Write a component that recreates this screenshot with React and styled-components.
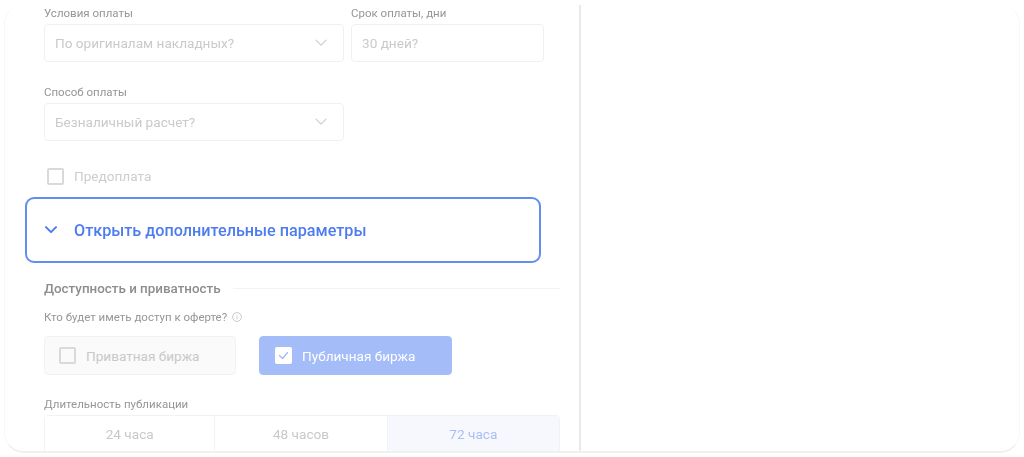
import styled, { createGlobalStyle } from "styled-components";

const GlobalStyle = createGlobalStyle`
  html, body {
    margin: 0;
    padding: 0;
    background: #fff;
    font-family: Roboto, "Liberation Sans", sans-serif;
  }
`;

const Page = styled.div`
  width: 1024px;
  height: 457px;
  padding: 4px;
  box-sizing: border-box;
  overflow: hidden;
`;

const Card = styled.div`
  display: flex;
  height: 449px;
  box-sizing: border-box;
  background: #fff;
  border: 1px solid #f8f8f8;
  border-top-color: #fdfdfd;
  border-bottom: 2px solid #f0f0f0;
  border-radius: 20px;
  overflow: hidden;
  filter: blur(0.35px);
`;

const LeftColumn = styled.div`
  width: 576px;
  box-sizing: border-box;
  padding: 1px 19px 0 39px;
  border-right: 2px solid #e9e9e9;
  flex-shrink: 0;
`;

const RightColumn = styled.div`
  flex: 1;
`;

const Row = styled.div`
  display: flex;
  gap: 7px;
`;

const Field = styled.div`
  width: ${(props) => props.width}px;
`;

const Label = styled.div`
  font-size: 11.5px;
  line-height: 14px;
  height: 14px;
  color: #969696;
  margin-bottom: 4px;
`;

const Control = styled.div`
  display: flex;
  align-items: center;
  justify-content: space-between;
  height: 38px;
  box-sizing: border-box;
  padding: 0 16px 0 10px;
  border: 1px solid #f0f0f0;
  border-radius: 4px;
  font-size: 13.6px;
  color: #cacaca;
`;

const SecondRow = styled(Row)`
  margin-top: 23px;
`;

const Check = styled.label`
  display: flex;
  align-items: center;
  gap: 10px;
  margin: 26px 0 0 3px;
  height: 18px;
  font-size: 13.6px;
  color: #cdcdcd;
`;

const Box = styled.span`
  display: flex;
  align-items: center;
  justify-content: center;
  width: 17px;
  height: 17px;
  box-sizing: border-box;
  border: ${(props) => (props.$checked ? "none" : "2px solid #d9d9d9")};
  border-radius: 2px;
  background: ${(props) => (props.$checked ? "#fff" : "transparent")};
  flex-shrink: 0;
`;

const Expander = styled.div`
  display: flex;
  align-items: center;
  gap: 17px;
  width: 516px;
  height: 66px;
  box-sizing: border-box;
  margin: 12px 0 0 -19px;
  padding: 0 0 0 18px;
  border: 2px solid #648cf2;
  border-radius: 9px;
  font-size: 16.2px;
  font-weight: 500;
  color: #4d7cf0;
`;

const SectionHead = styled.div`
  display: flex;
  align-items: center;
  gap: 12px;
  margin-top: 17px;
  height: 17px;
  font-size: 13.4px;
  font-weight: 500;
  color: #8d8d8d;
`;

const Rule = styled.div`
  flex: 1;
  height: 1px;
  background: #f3f3f3;
`;

const HintLabel = styled(Label)`
  display: flex;
  align-items: center;
  gap: 5px;
  margin: 13px 0 1px;
`;

const ExchangeRow = styled.div`
  display: flex;
  gap: 23px;
  margin-top: 12px;
`;

const Exchange = styled.div`
  display: flex;
  align-items: center;
  gap: 10px;
  width: ${(props) => (props.$active ? 193 : 192)}px;
  height: 39px;
  box-sizing: border-box;
  padding-left: ${(props) => (props.$active ? 15 : 14)}px;
  border: 1px solid ${(props) => (props.$active ? "#a4bcf7" : "#f2f2f2")};
  border-radius: 4px;
  background: ${(props) => (props.$active ? "#a4bcf7" : "#fafafa")};
  font-size: 13.6px;
  color: ${(props) => (props.$active ? "#ffffff" : "#c9c9c9")};
`;

const DurationLabel = styled(Label)`
  margin: 22px 0 4px;
`;

const Segments = styled.div`
  display: flex;
  width: 516px;
  height: 40px;
  box-sizing: border-box;
  border: 1px solid #f2f2f2;
  border-radius: 4px;
`;

const Segment = styled.div`
  display: flex;
  align-items: center;
  justify-content: center;
  width: ${(props) => props.width}px;
  border-right: ${(props) => (props.$last ? "none" : "1px solid #f2f2f2")};
  background: ${(props) => (props.$active ? "#f6f8fd" : "#fff")};
  font-size: 13.6px;
  padding-bottom: 2px;
  box-sizing: border-box;
  color: ${(props) => (props.$active ? "#a9bff5" : "#c9c9c9")};
`;

const Chevron = ({ color = "#cfcfcf", size = 12, width = 1.3 }) => (
  <svg width={size} height={size * 0.6} viewBox="0 0 12 7" fill="none">
    <path d="M1 1l5 5 5-5" stroke={color} strokeWidth={width} strokeLinecap="round" strokeLinejoin="round" />
  </svg>
);

const InfoIcon = () => (
  <svg width="10" height="10" viewBox="0 0 10 10" fill="none">
    <circle cx="5" cy="5" r="4.4" stroke="#bdbdbd" strokeWidth="0.8" />
    <path d="M5 4.4v2.8M5 2.7v.8" stroke="#bdbdbd" strokeWidth="0.8" />
  </svg>
);

const Tick = () => (
  <svg width="11" height="9" viewBox="0 0 11 9" fill="none">
    <path d="M1.5 4.5l3 3 5-6" stroke="#a4bcf7" strokeWidth="1.4" strokeLinecap="round" strokeLinejoin="round" />
  </svg>
);

const App = () => {
  return (
    <Page>
      <GlobalStyle />
      <Card>
        <LeftColumn>
          <Row>
            <Field width={300}>
              <Label>Условия оплаты</Label>
              <Control>
                По оригиналам накладных?
                <Chevron />
              </Control>
            </Field>
            <Field width={193}>
              <Label>Срок оплаты, дни</Label>
              <Control>30 дней?</Control>
            </Field>
          </Row>

          <SecondRow>
            <Field width={300}>
              <Label>Способ оплаты</Label>
              <Control>
                Безналичный расчет?
                <Chevron />
              </Control>
            </Field>
          </SecondRow>

          <Check>
            <Box />
            Предоплата
          </Check>

          <Expander>
            <Chevron color="#4d7cf0" size={12} width={2} />
            Открыть дополнительные параметры
          </Expander>

          <SectionHead>
            Доступность и приватность
            <Rule />
          </SectionHead>

          <HintLabel>
            Кто будет иметь доступ к оферте?
            <InfoIcon />
          </HintLabel>

          <ExchangeRow>
            <Exchange>
              <Box />
              Приватная биржа
            </Exchange>
            <Exchange $active>
              <Box $checked>
                <Tick />
              </Box>
              Публичная биржа
            </Exchange>
          </ExchangeRow>

          <DurationLabel>Длительность публикации</DurationLabel>
          <Segments>
            <Segment width={171}>24 часа</Segment>
            <Segment width={173}>48 часов</Segment>
            <Segment width={172} $active $last>
              72 часа
            </Segment>
          </Segments>
        </LeftColumn>
        <RightColumn />
      </Card>
    </Page>
  );
};

export default App;
